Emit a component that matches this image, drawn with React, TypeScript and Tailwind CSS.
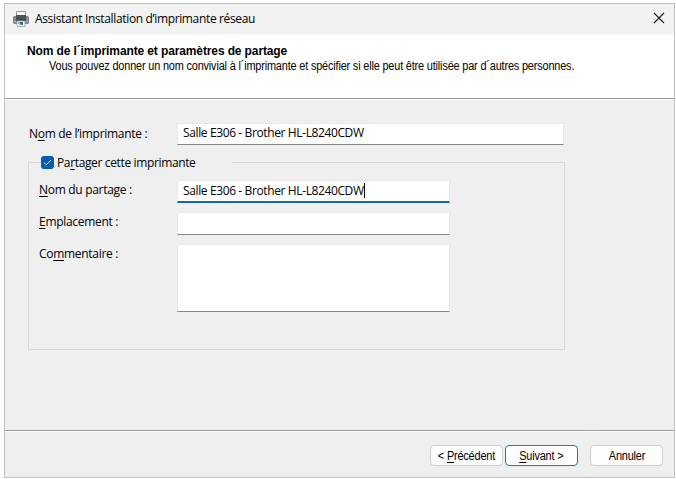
import { ReactNode } from 'react';

const PRINTER_NAME = 'Salle E306 - Brother HL-L8240CDW';

export default function App() {
    return (
        <div className="h-[479px] w-[676px] overflow-hidden bg-white pl-1 pt-[3px] font-['Open_Sans','Noto_Sans',sans-serif] text-xs text-black">
            <div className="flex h-[475px] w-[671px] flex-col border border-[#c1c1c1] bg-[#efefef]">
                <TitleBar />
                <header className="h-[64px] shrink-0 bg-white pl-[22px] pt-[10px] font-['Liberation_Sans',Arial,sans-serif]">
                    <h1 className="h-[15px] whitespace-nowrap text-xs font-bold leading-[15px] tracking-[-0.12px]">Nom de l´imprimante et paramètres de partage</h1>
                    <p className="ml-[22px] h-[15px] w-max origin-left scale-x-[0.908] whitespace-nowrap text-xs leading-[15px] tracking-[-0.18px]">
                        Vous pouvez donner un nom convivial à l´imprimante et spécifier si elle peut être utilisée par d´autres personnes.
                    </p>
                </header>
                <Divider />
                <PrinterForm />
                <Divider />
                <footer className="flex h-[46px] shrink-0 justify-end pr-[11px] pt-[13px] font-['Liberation_Sans',Arial,sans-serif]">
                    <WizardButton className="mr-0.5 border-[#cfcfcf]">&lt; <Key>P</Key>récédent</WizardButton>
                    <WizardButton className="mr-3 border-[#1a7bc0]"><Key>S</Key>uivant &gt;</WizardButton>
                    <WizardButton className="border-[#cfcfcf]">Annuler</WizardButton>
                </footer>
            </div>
        </div>
    );
}

function TitleBar() {
    return (
        <div className="flex h-[30px] shrink-0 items-center bg-[#f2f2f2] pl-2 pr-[9px]">
            <PrinterIcon />
            <span className="ml-1.5 whitespace-nowrap text-xs tracking-[-0.35px]">Assistant Installation d’imprimante réseau</span>
            <svg className="mb-0.5 ml-auto h-3 w-3" viewBox="0 0 12 12" fill="none" stroke="#1c1c1c" strokeWidth="1.1">
                <path d="M1 1l10 10M11 1L1 11" />
            </svg>
        </div>
    );
}

function PrinterForm() {
    return (
        <main className="h-[330px] shrink-0 pl-[23px] pt-[23px]">
            <div className="flex h-[22px]">
                <Label className="w-[149px] pl-px pt-px"><span>N<Key>o</Key>m de l’imprimante :</span></Label>
                <div className="h-[22px] w-[387px] whitespace-nowrap border border-[#e8e8e8] border-b-[#858585] bg-white pl-[5px] text-xs leading-[18px] tracking-[-0.38px]">{PRINTER_NAME}</div>
            </div>
            <fieldset className="mt-[9px] h-[196px] w-[537px] border border-[#dadada]">
                <legend className="ml-3 flex h-4 w-[191px] items-center whitespace-nowrap leading-4 tracking-[-0.36px]">
                    <span className="mr-[3px] flex h-[13px] w-[13px] items-center justify-center rounded-[3px] bg-[#075eb1]">
                        <svg className="h-[9px] w-[9px]" viewBox="0 0 9 9" fill="none" stroke="white" strokeWidth="0.8">
                            <path d="M1 4.5l2.3 2.3L8 2.2" />
                        </svg>
                    </span>
                    <span className="pt-0.5">Pa<Key>r</Key>tager cette imprimante</span>
                </legend>
                <div className="flex flex-col gap-[10px] pl-[9px] pt-[10px]">
                    <div className="flex h-[22px]">
                        <Label className="w-[139px] pl-px"><span><Key>N</Key>om du partage :</span></Label>
                        <div className="flex h-[23px] w-[273px] shrink-0 items-start whitespace-nowrap border border-b-2 border-[#e8e8e8] border-b-[#1167a8] bg-white pl-[5px] text-xs leading-[20px] tracking-[-0.38px]">
                            {PRINTER_NAME}
                            <span className="mt-[2px] h-[15px] w-px bg-black" />
                        </div>
                    </div>
                    <div className="flex h-[22px]">
                        <Label className="w-[139px] pl-px"><span><Key>E</Key>mplacement :</span></Label>
                        <div className="h-[23px] w-[273px] border border-[#e8e8e8] border-b-[#858585] bg-white" />
                    </div>
                    <div className="flex h-[68px]">
                        <Label className="w-[139px] pl-px"><span>Co<Key>m</Key>mentaire :</span></Label>
                        <div className="h-[68px] w-[273px] border border-[#e8e8e8] border-b-[#858585] bg-white" />
                    </div>
                </div>
            </fieldset>
        </main>
    );
}

function Label({ className, children }: { className: string; children: ReactNode }) {
    return <div className={`shrink-0 whitespace-nowrap text-xs leading-[19px] tracking-[-0.3px] ${className}`}>{children}</div>;
}

function WizardButton({ className, children }: { className: string; children: ReactNode }) {
    return (
        <button className={`h-[21px] w-[73px] whitespace-nowrap rounded border bg-[#fdfdfd] pt-px text-xs leading-[18px] tracking-[-0.2px] ${className}`}>
            <span className="inline-block scale-x-[0.91]">{children}</span>
        </button>
    );
}

// underlined keyboard accelerator
function Key({ children }: { children: ReactNode }) {
    return <span className="underline decoration-1 underline-offset-2">{children}</span>;
}

function Divider() {
    return <div className="h-0.5 shrink-0 border-t border-[#9b9b9b] bg-white" />;
}

function PrinterIcon() {
    return (
        <svg className="mb-px h-4 w-4" viewBox="0 0 16 16">
            <path d="M3.5 6V.5h9V6" fill="#f8f8f8" stroke="#969696" />
            <path d="M0 6l1-1h14l1 1v6l-1 1H1l-1-1z" fill="#85898b" />
            <path d="M3 4h10v6H3z" fill="#4b5053" />
            <path d="M1 10h14v1H1z" fill="#a5aaac" />
            <path d="M4 10h8v5.5H4z" fill="#f4f8f9" stroke="#8a9294" strokeWidth=".7" />
            <path d="M5 11h2v2H5z" fill="#7fc4cf" />
            <path d="M7 11h3v3H7z" fill="#326d9b" />
            <path d="M6 13h2v1H6z" fill="#8ac8d0" />
        </svg>
    );
}
